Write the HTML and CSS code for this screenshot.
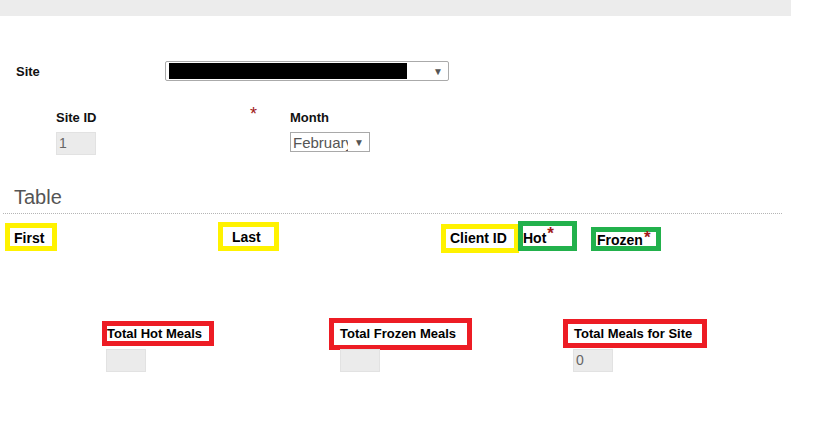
FILE: index.html
```html
<!DOCTYPE html>
<html lang="en">
<head>
    <meta charset="UTF-8">
    <title>Meals</title>
    <link rel="stylesheet" href="styles.css">
</head>
<body>
    <div class="topbar"></div>

    <div class="site-row">
        <label class="field-label site-label">Site</label>
        <div class="site-select">
            <span class="redacted"></span>
            <span class="arrow">&#9660;</span>
        </div>
    </div>

    <div class="info-row">
        <div class="col-siteid">
            <div class="field-label">Site ID</div>
            <div class="small-input">1</div>
        </div>
        <div class="col-star"><span class="star">*</span></div>
        <div class="col-month">
            <div class="field-label">Month</div>
            <div class="month-select">
                <span class="month-text">February</span>
                <span class="arrow">&#9660;</span>
            </div>
        </div>
    </div>

    <h2 class="section-title">Table</h2>

    <div class="head-row">
        <div class="mark yellow h-first">First</div>
        <div class="mark yellow h-last">Last</div>
        <div class="mark yellow h-client">Client ID</div>
        <div class="mark green h-hot">Hot<span class="req">*</span></div>
        <div class="mark green h-frozen">Frozen<span class="req">*</span></div>
    </div>

    <div class="totals-row">
        <div class="total t-hot">
            <div class="mark red">Total Hot Meals</div>
            <div class="small-input"></div>
        </div>
        <div class="total t-frozen">
            <div class="mark red">Total Frozen Meals</div>
            <div class="small-input"></div>
        </div>
        <div class="total t-site">
            <div class="mark red">Total Meals for Site</div>
            <div class="small-input">0</div>
        </div>
    </div>
</body>
</html>
```

FILE: styles.css
```css
body {
    margin: 0;
    font-family: "Liberation Sans", Arial, sans-serif;
    color: #000;
    background: #fff;
}

.topbar {
    width: 791px;
    height: 16px;
    background-color: #ececec;
}

.field-label {
    font-size: 13px;
    font-weight: bold;
    line-height: 15px;
    color: #111;
}

/* site selector */
.site-row {
    display: flex;
    align-items: center;
    margin-top: 45px;
}

.site-label {
    width: 149px;
    padding-left: 16px;
}

.site-select {
    width: 284px;
    height: 20px;
    box-sizing: border-box;
    border: 1px solid #aaa;
    border-radius: 2px;
    display: flex;
    align-items: center;
    justify-content: space-between;
    padding: 0 5px 0 3px;
}

.redacted {
    width: 238px;
    height: 16px;
    background: #000;
}

.arrow {
    font-size: 10px;
    color: #555;
}

/* site id / month */
.info-row {
    display: flex;
    margin-top: 29px;
    padding-left: 56px;
}

.col-siteid {
    width: 194px;
}

.col-star {
    width: 40px;
}

.star {
    display: block;
    margin-top: -6px;
    font-size: 18px;
    color: #a01818;
}

.small-input {
    width: 40px;
    height: 23px;
    box-sizing: border-box;
    background: #ebebeb;
    border: 1px solid #e2e2e2;
    color: #666;
    font-size: 14px;
    line-height: 21px;
    padding-left: 2px;
}

.col-siteid .small-input {
    margin-top: 7px;
}

.month-select {
    width: 80px;
    height: 20px;
    box-sizing: border-box;
    margin-top: 7px;
    border: 1px solid #a9a9a9;
    display: flex;
    align-items: center;
    padding: 0 5px 0 2px;
    color: #555;
}

.month-text {
    width: 57px;
    overflow: hidden;
    white-space: nowrap;
    font-size: 15px;
    margin-right: 6px;
}

/* table section */
.section-title {
    margin: 31px 57px 0 3px;
    padding: 0 0 4px 11px;
    font-size: 20px;
    font-weight: normal;
    line-height: 23px;
    color: #555;
    border-bottom: 1px dotted #b5b5b5;
}

.mark {
    box-sizing: border-box;
    border: 5px solid;
    background: #fff;
    font-weight: bold;
    white-space: nowrap;
}

.yellow { border-color: #fff200; }
.green { border-color: #22b14c; }
.red { border-color: #ed1c24; }

.head-row {
    display: flex;
    align-items: flex-start;
    margin-top: 7px;
    font-size: 14px;
    line-height: 18px;
}

.h-first {
    width: 52px;
    height: 28px;
    margin: 2px 0 0 5px;
    padding: 1px 0 0 4px;
}

.h-last {
    width: 61px;
    height: 29px;
    margin: 1px 0 0 161px;
    padding: 1px 0 0 9px;
}

.h-client {
    width: 78px;
    height: 29px;
    margin: 3px 0 0 162px;
    padding: 0 0 0 4px;
}

.h-hot {
    width: 59px;
    height: 30px;
    margin: 0 0 0 -1px;
    padding: 3px 0 0 0;
}

.h-frozen {
    width: 70px;
    height: 24px;
    margin: 6px 0 0 14px;
    padding: 1px 0 0 1px;
    line-height: 14px;
}

.req {
    color: #a01818;
    font-size: 17px;
    line-height: 10px;
    vertical-align: top;
    margin-left: 1px;
}

/* totals */
.totals-row {
    display: flex;
    margin-top: 65px;
    font-size: 13px;
    line-height: 15px;
}

.total {
    display: flex;
    flex-direction: column;
}

.total .mark {
    margin-bottom: 3px;
}

.t-hot {
    margin-left: 102px;
    padding-top: 3px;
}

.t-hot .mark {
    width: 112px;
    height: 25px;
}

.t-hot .small-input {
    margin-left: 4px;
}

.t-frozen {
    margin-left: 115px;
}

.t-frozen .mark {
    width: 143px;
    height: 32px;
    padding: 3px 0 0 6px;
    margin-bottom: -1px;
}

.t-frozen .small-input {
    margin-left: 11px;
}

.t-site {
    margin-left: 91px;
    padding-top: 1px;
}

.t-site .mark {
    width: 144px;
    height: 29px;
    padding: 2px 0 0 6px;
    margin-bottom: 1px;
}

.t-site .small-input {
    margin-left: 10px;
}
```
